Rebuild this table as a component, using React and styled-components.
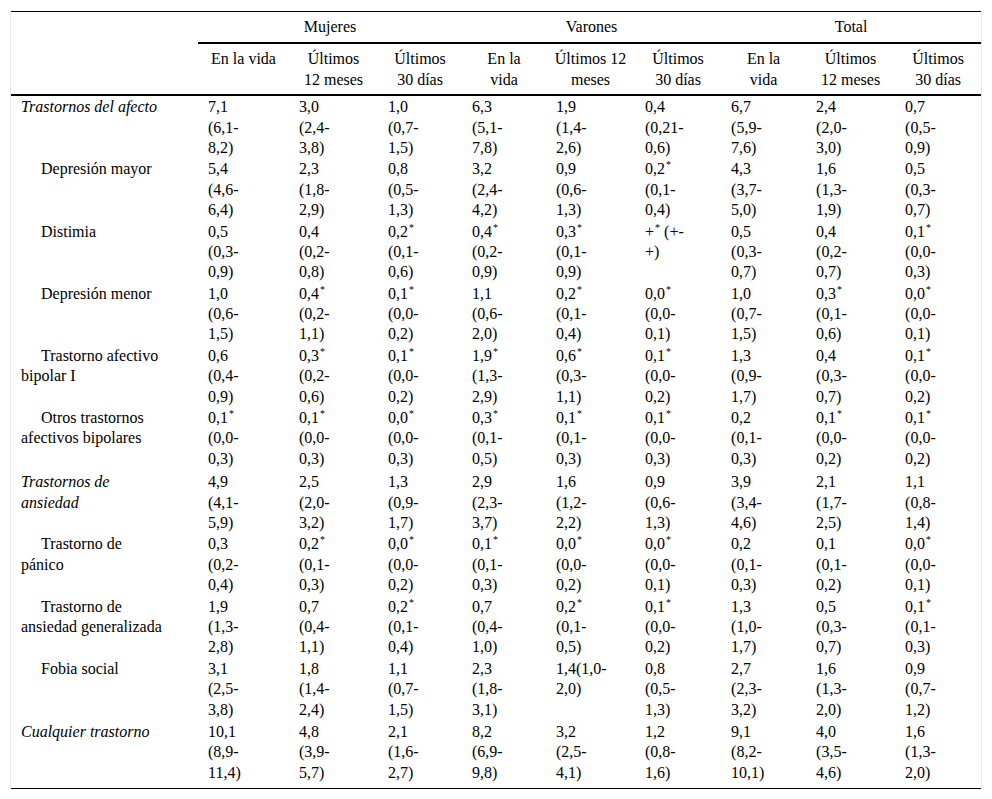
import styled, { createGlobalStyle } from 'styled-components';

const GlobalStyle = createGlobalStyle`
  body {
    margin: 0;
    background: #fff;
    color: #000;
    font-family: "Liberation Serif", "Times New Roman", serif;
  }
`;

const COLS = [187, 91, 89, 84, 84, 89, 86, 85, 89, 86];

const GROUPS = ['Mujeres', 'Varones', 'Total'];

const SUBHEADS = [
  'En la vida', 'Últimos/12 meses', 'Últimos/30 días',
  'En la/vida', 'Últimos 12/meses', 'Últimos/30 días',
  'En la/vida', 'Últimos/12 meses', 'Últimos/30 días',
];

const ROWS = [
  {
    label: 'Trastornos del afecto', category: true,
    cells: ['7,1/(6,1-/8,2)', '3,0/(2,4-/3,8)', '1,0/(0,7-/1,5)', '6,3/(5,1-/7,8)', '1,9/(1,4-/2,6)', '0,4/(0,21-/0,6)', '6,7/(5,9-/7,6)', '2,4/(2,0-/3,0)', '0,7/(0,5-/0,9)'],
  },
  {
    label: 'Depresión mayor',
    cells: ['5,4/(4,6-/6,4)', '2,3/(1,8-/2,9)', '0,8/(0,5-/1,3)', '3,2/(2,4-/4,2)', '0,9/(0,6-/1,3)', '0,2*/(0,1-/0,4)', '4,3/(3,7-/5,0)', '1,6/(1,3-/1,9)', '0,5/(0,3-/0,7)'],
  },
  {
    label: 'Distimia',
    cells: ['0,5/(0,3-/0,9)', '0,4/(0,2-/0,8)', '0,2*/(0,1-/0,6)', '0,4*/(0,2-/0,9)', '0,3*/(0,1-/0,9)', '+* (+-/+)', '0,5/(0,3-/0,7)', '0,4/(0,2-/0,7)', '0,1*/(0,0-/0,3)'],
  },
  {
    label: 'Depresión menor',
    cells: ['1,0/(0,6-/1,5)', '0,4*/(0,2-/1,1)', '0,1*/(0,0-/0,2)', '1,1/(0,6-/2,0)', '0,2*/(0,1-/0,4)', '0,0*/(0,0-/0,1)', '1,0/(0,7-/1,5)', '0,3*/(0,1-/0,6)', '0,0*/(0,0-/0,1)'],
  },
  {
    label: 'Trastorno afectivo/bipolar I',
    cells: ['0,6/(0,4-/0,9)', '0,3*/(0,2-/0,6)', '0,1*/(0,0-/0,2)', '1,9*/(1,3-/2,9)', '0,6*/(0,3-/1,1)', '0,1*/(0,0-/0,2)', '1,3/(0,9-/1,7)', '0,4/(0,3-/0,7)', '0,1*/(0,0-/0,2)'],
  },
  {
    label: 'Otros trastornos/afectivos bipolares',
    cells: ['0,1*/(0,0-/0,3)', '0,1*/(0,0-/0,3)', '0,0*/(0,0-/0,3)', '0,3*/(0,1-/0,5)', '0,1*/(0,1-/0,3)', '0,1*/(0,0-/0,3)', '0,2/(0,1-/0,3)', '0,1*/(0,0-/0,2)', '0,1*/(0,0-/0,2)'],
  },
  {
    label: 'Trastornos de/ansiedad', category: true, gap: 3,
    cells: ['4,9/(4,1-/5,9)', '2,5/(2,0-/3,2)', '1,3/(0,9-/1,7)', '2,9/(2,3-/3,7)', '1,6/(1,2-/2,2)', '0,9/(0,6-/1,3)', '3,9/(3,4-/4,6)', '2,1/(1,7-/2,5)', '1,1/(0,8-/1,4)'],
  },
  {
    label: 'Trastorno de/pánico',
    cells: ['0,3/(0,2-/0,4)', '0,2*/(0,1-/0,3)', '0,0*/(0,0-/0,2)', '0,1*/(0,1-/0,3)', '0,0*/(0,0-/0,2)', '0,0*/(0,0-/0,1)', '0,2/(0,1-/0,3)', '0,1/(0,1-/0,2)', '0,0*/(0,0-/0,1)'],
  },
  {
    label: 'Trastorno de/ansiedad generalizada',
    cells: ['1,9/(1,3-/2,8)', '0,7/(0,4-/1,1)', '0,2*/(0,1-/0,4)', '0,7/(0,4-/1,0)', '0,2*/(0,1-/0,5)', '0,1*/(0,0-/0,2)', '1,3/(1,0-/1,7)', '0,5/(0,3-/0,7)', '0,1*/(0,1-/0,3)'],
  },
  {
    label: 'Fobia social',
    cells: ['3,1/(2,5-/3,8)', '1,8/(1,4-/2,4)', '1,1/(0,7-/1,5)', '2,3/(1,8-/3,1)', '1,4(1,0-/2,0)', '0,8/(0,5-/1,3)', '2,7/(2,3-/3,2)', '1,6/(1,3-/2,0)', '0,9/(0,7-/1,2)'],
  },
  {
    label: 'Cualquier trastorno', category: true, gap: 2,
    cells: ['10,1/(8,9-/11,4)', '4,8/(3,9-/5,7)', '2,1/(1,6-/2,7)', '8,2/(6,9-/9,8)', '3,2/(2,5-/4,1)', '1,2/(0,8-/1,6)', '9,1/(8,2-/10,1)', '4,0/(3,5-/4,6)', '1,6/(1,3-/2,0)'],
  },
];

// render "0,2*" with the asterisk raised
function Mark({ text }) {
  const parts = text.split('*');
  return parts.map((p, i) => (
    <span key={i}>
      {p}
      {i < parts.length - 1 && <Star>*</Star>}
    </span>
  ));
}

function Lines({ text }) {
  const lines = text.split('/');
  return lines.map((l, i) => (
    <Line key={i}>
      <Mark text={l} />
    </Line>
  ));
}

export default function App() {
  return (
    <>
      <GlobalStyle />
      <Frame>
        <Table>
          <colgroup>
            {COLS.map((w, i) => (
              <col key={i} style={{ width: w }} />
            ))}
          </colgroup>
          <thead>
            <tr>
              <Corner rowSpan={2} />
              {GROUPS.map(g => (
                <GroupHead key={g} colSpan={3}>
                  {g}
                </GroupHead>
              ))}
            </tr>
            <tr>
              {SUBHEADS.map((h, i) => (
                <SubHead key={i}>
                  <Lines text={h} />
                </SubHead>
              ))}
            </tr>
          </thead>
          <tbody>
            {ROWS.map((row, r) => (
              <Row key={r} $gap={row.gap || 1} $last={r === ROWS.length - 1}>
                <Label $category={row.category}>
                  <Lines text={row.label} />
                </Label>
                {row.cells.map((c, i) => (
                  <Cell key={i}>
                    <Lines text={c} />
                  </Cell>
                ))}
              </Row>
            ))}
          </tbody>
        </Table>
      </Frame>
    </>
  );
}

const Frame = styled.div`
  margin: 11px 0 0 10px;
  width: 970px;
  border-left: 1px solid #e8e8e8;
  border-right: 1px solid #e8e8e8;
`;

const Table = styled.table`
  width: 970px;
  table-layout: fixed;
  border-collapse: collapse;
  font-family: "Liberation Serif", "Times New Roman", serif;
  font-size: 16px;
  line-height: 20.4px;
  color: #000;
  border-top: 1px solid #000;
  border-bottom: 1px solid #000;
`;

const Line = styled.div`
  height: 20.4px;
  white-space: nowrap;
`;

const Corner = styled.th`
  border-bottom: 2px solid #000;
  padding: 0;
`;

const GroupHead = styled.th`
  font-weight: normal;
  text-align: center;
  padding: 5px 0 4.5px;
  border-bottom: 2px solid #000;
`;

const SubHead = styled.th`
  font-weight: normal;
  text-align: center;
  vertical-align: top;
  padding: 5.5px 0 4px;
  border-bottom: 2px solid #000;
`;

const Row = styled.tr`
  td {
    vertical-align: top;
    padding-top: ${p => p.$gap}px;
    padding-bottom: ${p => (p.$last ? '5px' : '0')};
  }
`;

const Label = styled.td`
  padding-left: 10px;
  padding-right: 0;
  font-style: ${p => (p.$category ? 'italic' : 'normal')};
  div:first-child {
    padding-left: ${p => (p.$category ? '0' : '20px')};
  }
`;

const Cell = styled.td`
  padding-left: 10px;
  padding-right: 0;
`;

const Star = styled.span`
  font-size: 10px;
  line-height: 0;
  position: relative;
  top: -6px;
  margin-left: 1px;
`;
